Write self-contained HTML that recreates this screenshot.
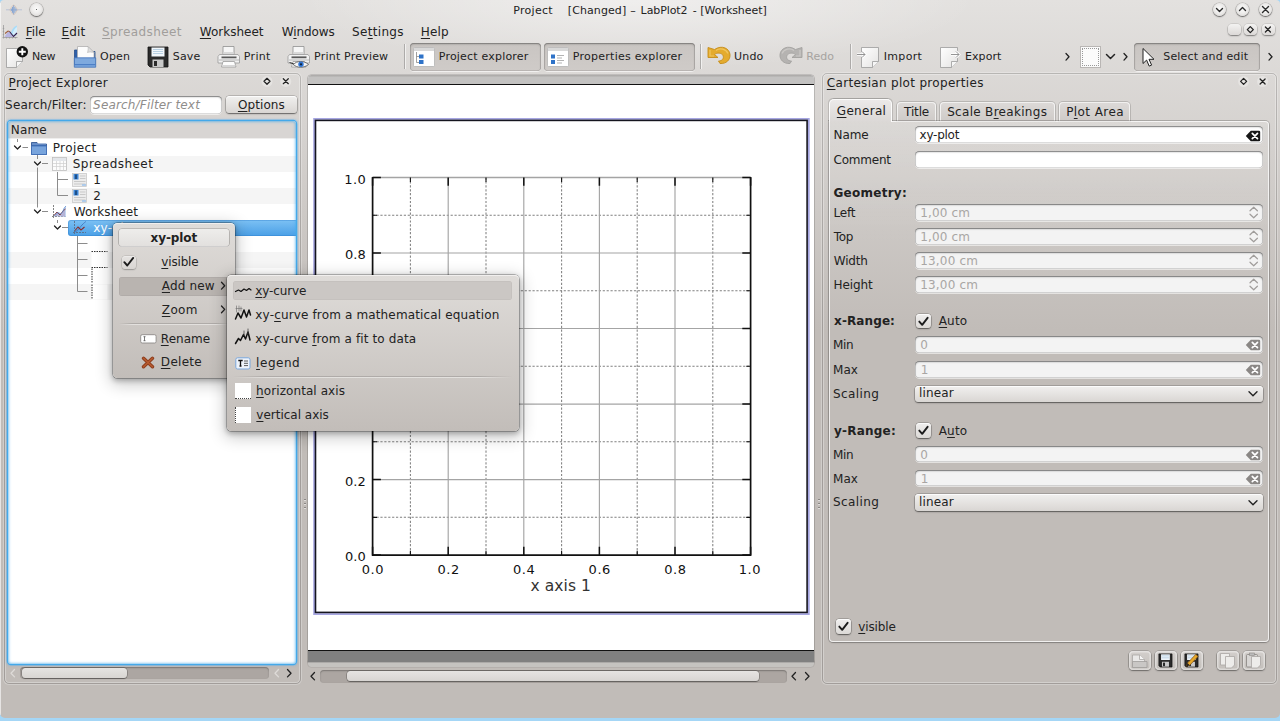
<!DOCTYPE html>
<html><head><meta charset="utf-8"><title>LabPlot2</title>
<style>
*{box-sizing:border-box;margin:0;padding:0}
html,body{width:1280px;height:721px;overflow:hidden}
body{position:relative;background:#a4d6f6;font-family:"DejaVu Sans","Liberation Sans",sans-serif;font-size:12.5px;color:#222;line-height:1}
.abs,.abs>*{position:absolute}
#win{position:absolute;left:0;top:0;width:1280px;height:718px;border-radius:4px 4px 5px 5px;overflow:hidden;
 background:radial-gradient(ellipse 340px 70px at 640px 0,rgba(255,255,255,.45),rgba(255,255,255,0) 100%),linear-gradient(#e3e1df 0,#c1bcb8 330px,#c1bcb8 100%)}
.t{position:absolute;white-space:nowrap;line-height:16px;height:16px}
u{text-decoration:underline;text-underline-offset:1.5px;text-decoration-thickness:1px}
.tb{font-size:11.2px;letter-spacing:.35px}
.dis{color:#9b9896}
.rb{margin:.6px;width:13.200px;height:13.200px;border-radius:50%;background:radial-gradient(circle at 50% 45%,#fbfbfa 0,#eeedec 45%,#d2cfcc 100%);box-shadow:0 0 0 .6px rgba(0,0,0,.22),0 1px 1.300px rgba(0,0,0,.5)}
.mb{width:13px;height:11px;border-radius:4px;background:linear-gradient(#f3f2f1,#dcd9d7);box-shadow:0 0 0 .5px rgba(0,0,0,.15),0 1px 1.5px rgba(0,0,0,.4)}

.pbtn{border-radius:4px;background:linear-gradient(#c9c5c2,#cfcbc8);box-shadow:inset 0 1px 2px rgba(0,0,0,.35),inset 0 0 0 .5px rgba(0,0,0,.18),0 1px 0 rgba(255,255,255,.6)}
.vsep{width:2px;background:linear-gradient(90deg,rgba(0,0,0,.22) 50%,rgba(255,255,255,.6) 50%)}

.dock{border:1px solid rgba(0,0,0,.16);border-radius:5px;box-shadow:inset 0 0 0 1px rgba(255,255,255,.3),0 0 0 1px rgba(255,255,255,.25)}
.inp{background:#fff;border-radius:4.500px;box-shadow:inset 0 1px 1.500px rgba(0,0,0,.45),inset 0 0 0 .5px rgba(0,0,0,.25),0 1px 0 rgba(255,255,255,.55)}
.inp.dis{background:#f3f3f3}
.btn{border-radius:3.500px;background:linear-gradient(#f1f0ef,#d9d6d3);box-shadow:0 0 0 .5px rgba(0,0,0,.3),0 1px 1.500px rgba(0,0,0,.45),inset 0 1px 0 rgba(255,255,255,.8)}
.tree{background:#fff;border-radius:3px;overflow:hidden;box-shadow:0 0 0 1.200px #44a9ea,0 0 1.500px 1.200px rgba(90,174,238,.35)}
.tglow{border-radius:3px;box-shadow:inset 0 0 2.500px .8px rgba(68,169,234,.75);pointer-events:none}
.tree>*{position:absolute}
.sgroove{border-radius:4px;background:#aca6a2;box-shadow:inset 0 1px 1.500px rgba(0,0,0,.3)}
.sthumb{border-radius:3.500px;background:linear-gradient(#e6e4e2,#d8d5d2);box-shadow:0 0 0 .5px rgba(0,0,0,.35),0 1px 1px rgba(0,0,0,.3)}

.mdi{background:#fff;border-radius:3.500px 3.500px 0 0;overflow:hidden;box-shadow:0 0 0 .6px rgba(0,0,0,.25)}
.mdi>*{position:absolute}

.pane{border-radius:0 4px 4px 4px;border:1px solid rgba(255,255,255,.75);box-shadow:0 0 0 1px rgba(0,0,0,.2),0 1px 2px rgba(0,0,0,.15);background:linear-gradient(rgba(255,255,255,.12),rgba(255,255,255,0) 120px)}
.tab{border-radius:4px 4px 0 0;border:1px solid rgba(255,255,255,.7);border-bottom:none;box-shadow:0 0 0 1px rgba(0,0,0,.15);background:linear-gradient(#dcd9d7,#cfcbc8)}
.tab.act{background:linear-gradient(#ebe9e8,#dbd8d6);border-radius:5px 5px 0 0;box-shadow:-1px -1px 0 0 rgba(0,0,0,.13),1px -1px 0 0 rgba(0,0,0,.13);border-color:rgba(255,255,255,.9)}
.btn2{border-radius:4px;background:linear-gradient(#d3cfcc,#c3bfbb);box-shadow:0 0 0 .6px rgba(0,0,0,.28),0 1px 1.500px rgba(0,0,0,.35),inset 0 0 0 1.500px rgba(255,255,255,.4)}
.chk{width:14.500px;height:14.500px;border-radius:3.500px;background:linear-gradient(#f0efee,#dcd9d6);box-shadow:0 0 0 .5px rgba(0,0,0,.3),0 1px 1.500px rgba(0,0,0,.45),inset 0 1px 0 rgba(255,255,255,.8)}

.menu{border-radius:4.500px;background:linear-gradient(#dfdcd9,#c2bdb9);box-shadow:0 0 0 .7px rgba(0,0,0,.32),inset 0 1px 0 rgba(255,255,255,.55),0 4px 16px 3px rgba(0,0,0,.2),0 2px 5px 1px rgba(0,0,0,.24)}
.msep{height:2px;background:linear-gradient(rgba(0,0,0,.14) 50%,rgba(255,255,255,.45) 50%);-webkit-mask-image:linear-gradient(90deg,transparent,#000 12%,#000 88%,transparent);mask-image:linear-gradient(90deg,transparent,#000 12%,#000 88%,transparent)}
</style></head><body>
<div id="win"><div style="position:absolute;left:0;top:3px;width:1.200px;height:712px;background:rgba(255,255,255,.6)"></div>
<div class="abs" id="titlebar">
 <svg style="left:5px;top:3px" width="18" height="14" viewBox="0 0 18 14"><path d="M1 6.800h16" stroke="#b9c2d6" stroke-width="1"/><path d="M5 6.800v0M6.300 5.500v2.600M7.500 3.800v6M8.700 2v9.600M9.900 3.800v6M11.100 5.500v2.600" stroke="#7f9fd0" stroke-width=".9" fill="none"/><path d="M4.500 6.800c1.500-1 2.500-4.800 4.200-4.800s2.700 3.800 4.200 4.800c-1.500 1-2.500 4.800-4.200 4.800s-2.700-3.800-4.200-4.800z" fill="none" stroke="#d9b9a0" stroke-width=".5"/></svg>
 <div class="rb" style="left:29.200px;top:2.200px"></div><div style="left:35.600px;top:8.600px;width:1.800px;height:1.800px;border-radius:1px;background:#333"></div>
 <div class="rb" style="left:1212.300px;top:2.200px"></div>
 <div class="rb" style="left:1235.300px;top:2.200px"></div>
 <div class="rb" style="left:1258.200px;top:2.200px"></div>
 <svg style="left:1212px;top:2px" width="70" height="15" viewBox="0 0 70 15"><g fill="none" stroke="#2a2a2a" stroke-width="1.4" stroke-linecap="round" stroke-linejoin="round"><path d="M4.5 6.5l3 3 3-3"/><path d="M27.5 8.5l3-3 3 3"/><path d="M50.5 4.5l6 6m0-6l-6 6"/></g></svg>
 <div class="mb" style="left:1227.5px;top:24px"></div>
 <div class="mb" style="left:1244px;top:24px"></div>
 <div class="mb" style="left:1261.5px;top:24px"></div>
 <svg style="left:1244px;top:24px" width="32" height="11" viewBox="0 0 32 11"><g fill="none" stroke="#222" stroke-width="1.3" stroke-linejoin="round" stroke-linecap="round"><path d="M6.3 2.6l3 3-3 3-3-3z"/><path d="M21.4 3l5 5m0-5l-5 5"/></g></svg>
<div class="t" style="left:513.35px;top:3px;font-size:11px;letter-spacing:0.275px;">Project</div><div class="t" style="left:567.85px;top:3px;font-size:11px;letter-spacing:0.081px;">[Changed]</div><div class="t" style="left:630.35px;top:3px;font-size:11px;">–</div><div class="t" style="left:640.60px;top:3px;font-size:11px;letter-spacing:-0.086px;">LabPlot2</div><div class="t" style="left:692.85px;top:3px;font-size:11px;">-</div><div class="t" style="left:700.35px;top:3px;font-size:11px;letter-spacing:-0.060px;">[Worksheet]</div></div><div class="abs" id="menubar">
 <svg style="left:2px;top:24px" width="17" height="17" viewBox="0 0 17 17"><path d="M1.500 1v13.500M.5 13.500h15M.8 4.500h1.400M.8 7.500h1.400M.8 10.500h1.400M4.500 13v1.500M7.500 13v1.500M10.500 13v1.500M13.500 13v1.500" stroke="#9a9a9a" stroke-width=".8" fill="none"/><path d="M8.500 10c1-4 3-7.500 6.500-8.500v9l-3 2.500z" fill="#aadcf8"/><path d="M10.500 9.500c1-3 2.500-5.500 4.500-6.500v6l-2.500 2.500z" fill="#d4eefc"/><path d="M2.500 13l3.500-5.500 2 1.500 3 4z" fill="#b4b0e2" opacity=".9"/><path d="M3 9.500l3-2.500 1.500.5" stroke="#a0603c" stroke-width="1.100" fill="none"/><path d="M7.500 7.500l4 5 3.500-3.500" stroke="#3a1d4a" stroke-width="1.100" fill="none"/></svg>
<div class="t" style="left:25.85px;top:24px;font-size:12px;letter-spacing:-0.117px;"><u>F</u>ile</div><div class="t" style="left:61.60px;top:24px;font-size:12px;letter-spacing:0.133px;"><u>E</u>dit</div><div class="t" style="left:102.10px;top:24px;font-size:12px;letter-spacing:0.365px;color:#a19e9b;"><u>S</u>preadsheet</div><div class="t" style="left:199.85px;top:24px;font-size:12px;letter-spacing:-0.012px;"><u>W</u>orksheet</div><div class="t" style="left:281.85px;top:24px;font-size:12px;letter-spacing:-0.100px;">W<u>i</u>ndows</div><div class="t" style="left:352.10px;top:24px;font-size:12px;letter-spacing:0.307px;">Se<u>t</u>tings</div><div class="t" style="left:420.85px;top:24px;font-size:12px;letter-spacing:0.133px;"><u>H</u>elp</div></div><div class="abs" id="toolbar"><div class="pbtn" style="left:410px;top:43px;width:131px;height:27.500px"></div><div class="pbtn" style="left:544px;top:43px;width:151px;height:27.500px"></div><div class="pbtn" style="left:1134px;top:43px;width:125.500px;height:27.500px"></div><div class="vsep" style="left:404.2px;top:44px;height:25px"></div><div class="vsep" style="left:700px;top:44px;height:25px"></div><div class="vsep" style="left:850px;top:44px;height:25px"></div><svg style="left:5px;top:45px" width="26" height="24" viewBox="0 0 26 24"><defs><linearGradient id="pg" x1="0" y1="0" x2="1" y2="1"><stop offset="0" stop-color="#fff"/><stop offset="1" stop-color="#e4e3e2"/></linearGradient></defs><path d="M1.500 3.500h16v13l-6 6h-10z" fill="url(#pg)" stroke="#9b9b9b" stroke-width=".8"/><path d="M17.500 16.500h-6v6" fill="#f6f6f6" stroke="#9b9b9b" stroke-width=".8"/><circle cx="17.300" cy="6.800" r="5.700" fill="#111"/><path d="M17.300 3.300v7M13.800 6.800h7" stroke="#fff" stroke-width="1.900"/></svg><svg style="left:73px;top:45px" width="24" height="24" viewBox="0 0 24 24"><path d="M1.500 5h5l1 1.500h14.500v13.500h-20.500z" fill="#2f5fa8" stroke="#274e8a" stroke-width=".8"/><path d="M4.500 1.500h10.500l6 6v8h-16.500z" fill="#fcfcfc" stroke="#b0b0b0" stroke-width=".8"/><path d="M15 1.500c.5 2 0 4.500-.5 6 2-.8 4.500-.5 6.500 0z" fill="#dedede" stroke="#b0b0b0" stroke-width=".6"/><path d="M1.300 12.800h21.400v9.400h-21.400z" fill="#7ea9de" stroke="#3f70b8" stroke-width=".8"/><path d="M1.800 19.700h20.400" stroke="#4d7fc6" stroke-width="1.200"/></svg><svg style="left:147px;top:46px" width="22" height="22" viewBox="0 0 22 22"><path d="M1 1h20v20h-18l-2-2z" fill="#2b2b2b" stroke="#111" stroke-width=".8"/><rect x="4.500" y="1.500" width="13" height="9" fill="#f2f7fb"/><path d="M6 3.500h10M6 5.500h10M6 7.500h10" stroke="#a9c6dd" stroke-width=".8"/><rect x="5.500" y="13.500" width="11" height="7.500" fill="#c9c9c9"/><rect x="7" y="15" width="3" height="5" fill="#2b2b2b"/></svg><svg style="left:217px;top:45px" width="24" height="24" viewBox="0 0 24 24"><path d="M6 1.500h11v8h-11z" fill="#f6f6f6" stroke="#8f8f8f" stroke-width=".8"/><path d="M6.500 7h10v2.500h-10z" fill="#d9d9d9"/><path d="M2.500 9.500h18.500l1.500 2v6.500h-21.500v-6.500z" fill="#f1f1f1" stroke="#9a9a9a" stroke-width=".8"/><path d="M4.500 12.300h15" stroke="#5a5a5a" stroke-width="1.800"/><path d="M2 15h20" stroke="#c9c9c9" stroke-width="1.400"/><path d="M6 16.500h11.500l1.500 5.500h-14.500z" fill="#fcfcfc" stroke="#9a9a9a" stroke-width=".8"/><path d="M5.500 20.500h13" stroke="#d6d6d6" stroke-width="1.200"/></svg><svg style="left:287px;top:45px" width="24" height="24" viewBox="0 0 24 24"><path d="M6 1.500h11v8h-11z" fill="#f6f6f6" stroke="#8f8f8f" stroke-width=".8"/><path d="M6.500 7h10v2.500h-10z" fill="#d9d9d9"/><path d="M2.500 9.500h18.500l1.500 2v6.500h-21.500v-6.500z" fill="#f1f1f1" stroke="#9a9a9a" stroke-width=".8"/><path d="M4.500 12.300h15" stroke="#5a5a5a" stroke-width="1.800"/><path d="M2 15h20" stroke="#c9c9c9" stroke-width="1.400"/><path d="M6 16.500h11.500l1.500 5.500h-14.500z" fill="#fcfcfc" stroke="#9a9a9a" stroke-width=".8"/><path d="M5.500 20.500h13" stroke="#d6d6d6" stroke-width="1.200"/><path d="M6.500 19.500c3-4 11-4 15 0c-4 3.600-12 3.600-15 0z" fill="#f4f4f4" stroke="#555" stroke-width=".8"/><circle cx="14" cy="19.300" r="2.700" fill="#2f74d4"/><circle cx="14" cy="19.300" r="1.100" fill="#123"/><path d="M2.500 17.500l4.500 1.500" stroke="#333" stroke-width="1"/></svg><svg style="left:413px;top:47px" width="22" height="20" viewBox="0 0 22 20"><rect x=".5" y=".5" width="21" height="19" rx="1" fill="#fff" stroke="#b4b4b4" stroke-width=".8"/><rect x="1" y="1" width="20" height="3" fill="#d9d9d9"/><path d="M3.500 5v10.500h3M3.500 9.500h3" stroke="#888" stroke-width=".8" fill="none"/><rect x="6" y="7.500" width="4.500" height="4" fill="#2f73c8"/><rect x="6" y="13" width="4.500" height="4" fill="#2f73c8"/></svg><svg style="left:547px;top:47px" width="22" height="20" viewBox="0 0 22 20"><rect x=".5" y=".5" width="21" height="19" rx="1" fill="#fff" stroke="#b4b4b4" stroke-width=".8"/><rect x="1" y="1" width="20" height="3" fill="#d9d9d9"/><rect x="4" y="7.500" width="4" height="4" fill="#2f73c8"/><rect x="4" y="13" width="4" height="4" fill="#2f73c8"/><path d="M10 8.500h7M10 11h5M10 13.500h7M10 16h5" stroke="#aaa" stroke-width=".9"/></svg><svg style="left:707px;top:44px" width="24" height="21" viewBox="0 0 24 21"><path d="M1 3.500L1 13.500L11 13.500L7.500 10.500C10 8.500 14.500 8.500 16 11.500C17.300 14.500 15 17 11.500 17L13 19.500C19 20 23.500 16 23 10.500C22.500 4.500 15 0.500 7.500 5.500Z" fill="#e4ab2e" stroke="#c58c1a" stroke-width=".9" stroke-linejoin="round"/><path d="M3 6v6h4M9 6.500c4-3 10-1.500 12 3" fill="none" stroke="#f3cc6a" stroke-width="1.200" opacity=".8"/></svg><svg style="left:779px;top:44px" width="24" height="21" viewBox="0 0 24 21"><g transform="translate(24,0) scale(-1,1)"><path d="M1 3.500L1 13.500L11 13.500L7.500 10.500C10 8.500 14.500 8.500 16 11.500C17.300 14.500 15 17 11.500 17L13 19.500C19 20 23.500 16 23 10.500C22.500 4.500 15 0.500 7.500 5.500Z" fill="#b5b3b1" stroke="#a3a19f" stroke-width=".9" stroke-linejoin="round"/><path d="M3 6v6h4M9 6.500c4-3 10-1.500 12 3" fill="none" stroke="#cfcdcb" stroke-width="1.200" opacity=".8"/></g></svg><svg style="left:856px;top:46px" width="24" height="23" viewBox="0 0 24 23"><defs><linearGradient id="pg" x1="0" y1="0" x2="1" y2="1"><stop offset="0" stop-color="#fff"/><stop offset="1" stop-color="#e4e3e2"/></linearGradient></defs><path d="M5.500 1.500h17v14l-6 6h-11z" fill="url(#pg)" stroke="#9b9b9b" stroke-width=".8"/><path d="M22.500 15.500h-6v6" fill="#f6f6f6" stroke="#9b9b9b" stroke-width=".8"/><path d="M1 8.500h8m-3-3l3 3-3 3" fill="none" stroke="#fff" stroke-width="2.600"/><path d="M1 8.500h8m-3-3l3 3-3 3" fill="none" stroke="#888" stroke-width=".9"/></svg><svg style="left:939px;top:46px" width="24" height="23" viewBox="0 0 24 23"><defs><linearGradient id="pg" x1="0" y1="0" x2="1" y2="1"><stop offset="0" stop-color="#fff"/><stop offset="1" stop-color="#e4e3e2"/></linearGradient></defs><path d="M1.500 1.500h17v14l-6 6h-11z" fill="url(#pg)" stroke="#9b9b9b" stroke-width=".8"/><path d="M18.500 15.500h-6v6" fill="#f6f6f6" stroke="#9b9b9b" stroke-width=".8"/><path d="M12 8.500h8m-3-3l3 3-3 3" fill="none" stroke="#fff" stroke-width="2.600"/><path d="M12 8.500h8m-3-3l3 3-3 3" fill="none" stroke="#888" stroke-width=".9"/></svg><svg style="left:1060px;top:48px" width="220" height="18" viewBox="0 0 220 18"><g fill="none" stroke="#222" stroke-width="1.300" stroke-linecap="round" stroke-linejoin="round"><path d="M6 5.500l3 3.300-3 3.300"/><path d="M64 5.500l3 3.300-3 3.300"/><path d="M209 5.500l3 3.300-3 3.300"/><path d="M46.500 6.500l4 4 4-4" stroke-width="1.500"/></g></svg><div style="left:1079.500px;top:46px;width:21px;height:21.500px;background:#fbfbfb;border:1px solid #b9b6b4"></div><div style="left:1081.500px;top:48px;width:17px;height:17.500px;border:1px dotted #999"></div><svg style="left:1141px;top:47px" width="16" height="22" viewBox="0 0 16 22"><path d="M2 1.500v15l3.600-3.400 2.600 6 2.400-1-2.600-5.800h5z" fill="#fff" stroke="#222" stroke-width="1" stroke-linejoin="round"/></svg><div class="t" style="left:32.10px;top:49px;font-size:11px;letter-spacing:-0.300px;">New</div><div class="t" style="left:100.10px;top:49px;font-size:11px;letter-spacing:0.133px;">Open</div><div class="t" style="left:172.85px;top:49px;font-size:11px;letter-spacing:0.133px;">Save</div><div class="t" style="left:243.85px;top:49px;font-size:11px;letter-spacing:0.288px;">Print</div><div class="t" style="left:314.10px;top:49px;font-size:11px;letter-spacing:0.200px;">Print Preview</div><div class="t" style="left:438.85px;top:49px;font-size:11px;letter-spacing:0.193px;">Project explorer</div><div class="t" style="left:572.85px;top:49px;font-size:11px;letter-spacing:0.258px;">Properties explorer</div><div class="t" style="left:734.10px;top:49px;font-size:11px;letter-spacing:0.133px;">Undo</div><div class="t" style="left:806.35px;top:49px;font-size:11px;letter-spacing:-0.033px;color:#a6a3a0;">Redo</div><div class="t" style="left:883.85px;top:49px;font-size:11px;letter-spacing:0.280px;">Import</div><div class="t" style="left:965.10px;top:49px;font-size:11px;letter-spacing:0.030px;">Export</div><div class="t" style="left:1163.35px;top:49px;font-size:11px;letter-spacing:0.136px;">Select and edit</div></div><div class="abs" id="leftdock"><div class="dock" style="left:3.500px;top:72.500px;width:297px;height:611px"></div><div class="t" style="left:8.60px;top:75px;font-size:12px;letter-spacing:0.277px;"><u>P</u>roject Explorer</div><svg style="left:260px;top:75px" width="34" height="13" viewBox="0 0 34 13"><circle cx="7" cy="6.400" r="5.500" fill="#fff" opacity=".3"/><circle cx="25.800" cy="6.400" r="5.500" fill="#fff" opacity=".3"/><g fill="none" stroke="#222" stroke-width="1.250" stroke-linejoin="round" stroke-linecap="round"><path d="M7 3.300l3 3-3 3-3-3z"/><path d="M23.300 3.700l5 5m0-5l-5 5"/></g></svg><div class="t" style="left:5.10px;top:97px;font-size:12px;letter-spacing:0.204px;">Search/Filter:</div><div class="inp" style="left:89.500px;top:96px;width:132px;height:17.500px"></div><div class="t" style="left:93.10px;top:97px;font-size:12px;letter-spacing:0.171px;color:#8f8d8b;font-style:italic;">Search/Filter text</div><div class="btn" style="left:226px;top:96px;width:71px;height:17px"></div><div class="t" style="left:237.90px;top:97px;font-size:12px;letter-spacing:0.100px;"><u>O</u>ptions</div><div class="tree" style="left:8px;top:120.500px;width:288px;height:543.500px"><div style="left:0;top:0;width:100%;height:18px;background:#d8d5d3;border-bottom:1px solid #efeeed"></div><div style="left:0;top:35.5px;width:100%;height:16px;background:#f5f5f5"></div><div style="left:0;top:67.5px;width:100%;height:16px;background:#f5f5f5"></div><div style="left:0;top:131.5px;width:100%;height:16px;background:#f5f5f5"></div><div style="left:0;top:163.5px;width:100%;height:16px;background:#f5f5f5"></div><div style="left:60px;top:99.5px;width:240px;height:16px;border-radius:3px 0 0 3px;background:linear-gradient(#7cc1f4,#4a9fe6);box-shadow:inset 0 0 0 1px rgba(40,120,200,.35)"></div></div><svg style="left:8px;top:138px" width="110" height="166" viewBox="8 138 110 166"><g stroke="#8c8c8c" stroke-width="1" fill="none"><path d="M17.500 139v3M22.500 147.500h5.500"/><path d="M37.500 155v4M37.500 167.500v40M42 163.500h6M42 211.500h6"/><path d="M57.500 172v23.500M57.500 179.500h10.500M57.500 195.500h10.500M57.500 220v3M62 227.500h6"/><path d="M77.500 236v55.500M77.500 243.500h10M77.500 259.500h10M77.500 275.500h10M77.500 291.500h10"/></g><path d="M14.5 146.0l3 3 3-3" fill="none" stroke="#222" stroke-width="1.300" stroke-linecap="round" stroke-linejoin="round"/><path d="M34.5 162.0l3 3 3-3" fill="none" stroke="#222" stroke-width="1.300" stroke-linecap="round" stroke-linejoin="round"/><path d="M34.5 210.0l3 3 3-3" fill="none" stroke="#222" stroke-width="1.300" stroke-linecap="round" stroke-linejoin="round"/><path d="M54.5 226.0l3 3 3-3" fill="none" stroke="#222" stroke-width="1.300" stroke-linecap="round" stroke-linejoin="round"/><rect x="91.500" y="236.5" width="16" height="15" fill="#fff"/><path d="M91.500 251.5h16" stroke="#333" stroke-width="1" stroke-dasharray="1.500 1" fill="none"/><rect x="91.500" y="252.5" width="16" height="15" fill="#fff"/><path d="M91.500 267.5h16" stroke="#333" stroke-width="1" stroke-dasharray="1.500 1" fill="none"/><rect x="91.500" y="268.5" width="16" height="15" fill="#fff"/><path d="M92 268.5v15" stroke="#333" stroke-width="1" stroke-dasharray="1.500 1" fill="none"/><rect x="91.500" y="284.5" width="16" height="15" fill="#fff"/><path d="M92 284.5v15" stroke="#333" stroke-width="1" stroke-dasharray="1.500 1" fill="none"/></svg><svg style="left:30px;top:140px" width="18" height="16" viewBox="0 0 18 16"><path d="M1.500 2.500h5.500l1 1.500h8.500v10.500h-15z" fill="#3d6cb4" stroke="#2c528f" stroke-width=".8"/><path d="M1.500 6h15v8.500h-15z" fill="#78a4dc" stroke="#3d6cb4" stroke-width=".8"/><path d="M2 4h14" stroke="#a9c4ea" stroke-width=".8"/></svg><svg style="left:51px;top:156px" width="17" height="16" viewBox="0 0 17 16"><rect x="1.500" y="1.500" width="14" height="13" fill="#fcfcfc" stroke="#bdbdbd" stroke-width=".8"/><rect x="2" y="2" width="13" height="3" fill="#e3e6ea"/><path d="M2 7.500h13M2 10.500h13M5.500 5v9.500M9 5v9.500M12.500 5v9.500" stroke="#cfcfcf" stroke-width=".7"/></svg><svg style="left:72px;top:173px" width="15" height="14" viewBox="0 0 15 14"><rect x=".5" y=".5" width="14" height="13" fill="#ececec" stroke="#c4c4c4" stroke-width=".7"/><rect x="1.500" y="1" width="5" height="5.500" fill="#3e86d6"/><rect x="3.300" y="1.500" width="1.400" height="4.500" fill="#123a6a"/><path d="M8 3h5.500M8 5.500h5.500M2 8.500h11.500M2 11h11.500" stroke="#c9c9c9" stroke-width="1"/><path d="M10 12h4" stroke="#9cc3ee" stroke-width="1.500"/></svg><svg style="left:72px;top:189px" width="15" height="14" viewBox="0 0 15 14"><rect x=".5" y=".5" width="14" height="13" fill="#ececec" stroke="#c4c4c4" stroke-width=".7"/><rect x="1.500" y="1" width="5" height="5.500" fill="#3e86d6"/><rect x="3.300" y="1.500" width="1.400" height="4.500" fill="#123a6a"/><path d="M8 3h5.500M8 5.500h5.500M2 8.500h11.500M2 11h11.500" stroke="#c9c9c9" stroke-width="1"/><path d="M10 12h4" stroke="#9cc3ee" stroke-width="1.500"/></svg><svg style="left:51px;top:204px" width="17" height="16" viewBox="0 0 17 16"><path d="M2.500 1v13M1 12.500h14.500" stroke="#777" stroke-width=".9" stroke-dasharray="2 1" fill="none"/><path d="M3 12c2-1 3-4 5-3s3 2 4-1 2-5 3-6v11z" fill="#bcd0ee" opacity=".85"/><path d="M3 12l3-3.500 3 3 3-3.500 2-2v6.500z" fill="#a08ab8" opacity=".45"/><path d="M3 11.500l3-3.500 3 3 3-4 2.500-2" stroke="#8a3a3a" stroke-width="1" fill="none"/><path d="M3 12c2-1 3-4 5-3s3 1 4-2 2-4 3-5" stroke="#5a8ad0" stroke-width=".9" fill="none"/></svg><svg style="left:72px;top:220px" width="15" height="16" viewBox="0 0 15 16"><path d="M2.500 1v13M1 12.500h13" stroke="#5b6f8a" stroke-width=".9" stroke-dasharray="2 1" fill="none"/><path d="M3 12c3-1 5-5 7-7s3-3 4-3.500" stroke="#3f6fb5" stroke-width=".8" fill="none"/><path d="M3 10.500l3-3.500 3 3 3.500-3" stroke="#8a2f2f" stroke-width="1.100" fill="none"/></svg><div class="t" style="left:10.85px;top:122px;font-size:12px;letter-spacing:0.133px;">Name</div><div class="t" style="left:52.70px;top:140px;font-size:12px;letter-spacing:0.400px;">Project</div><div class="t" style="left:72.80px;top:156px;font-size:12px;letter-spacing:0.450px;">Spreadsheet</div><div class="t" style="left:93.20px;top:172px;font-size:12px;">1</div><div class="t" style="left:93.20px;top:188px;font-size:12px;">2</div><div class="t" style="left:73.70px;top:204px;font-size:12px;letter-spacing:0.075px;">Worksheet</div><div class="t" style="left:93.20px;top:220px;font-size:12px;letter-spacing:0.300px;color:#fff;">xy-plot</div><div class="tglow" style="left:8px;top:120.500px;width:288px;height:543.500px"></div><div class="sgroove" style="left:20px;top:666.700px;width:249px;height:12.800px"></div><div class="sthumb" style="left:21.500px;top:668px;width:105.700px;height:10.200px"></div><svg style="left:8px;top:666px" width="290" height="15" viewBox="0 0 290 15"><g fill="none" stroke-width="1.300" stroke-linecap="round" stroke-linejoin="round"><path d="M6.500 3.500l-3.500 3.700 3.500 3.700" stroke="#dedbd8"/><path d="M270.500 3.500l-3.500 3.700 3.500 3.700" stroke="#dedbd8"/><path d="M279.500 3.500l3.500 3.700-3.500 3.700" stroke="#222"/></g></svg></div><div class="abs" id="center"><div style="left:303.5px;top:499px;width:2px;height:11px;background:repeating-linear-gradient(rgba(0,0,0,.28) 0 1px,rgba(255,255,255,.5) 1px 2px,transparent 2px 4px)"></div><div style="left:817.5px;top:499px;width:2px;height:11px;background:repeating-linear-gradient(rgba(0,0,0,.28) 0 1px,rgba(255,255,255,.5) 1px 2px,transparent 2px 4px)"></div><div style="left:307.500px;top:661px;width:506.400px;height:5.500px;background:#c5c3c0;border-radius:0 0 3.500px 3.500px;box-shadow:0 0 0 .6px rgba(0,0,0,.12)"></div><div class="mdi" style="left:307.500px;top:74.700px;width:506.400px;height:587.100px"><div style="left:0;top:0;width:100%;height:9.300px;background:linear-gradient(#a9a7a5,#c3c2c1 2.500px)"></div><div style="left:0;top:9px;width:100%;height:1.400px;background:#111"></div><div style="left:0;bottom:0;width:100%;height:10.300px;background:#808080"></div><div style="left:0;bottom:10.300px;width:100%;height:1.100px;background:#111"></div></div><svg style="left:308px;top:84px" width="506" height="566" viewBox="308 84 506 566"><rect x="314.100" y="118.900" width="494.700" height="495.200" fill="none" stroke="#a6a6e2" stroke-width="1.800"/><rect x="315.500" y="120.400" width="491.600" height="492" fill="none" stroke="#15151f" stroke-width="1.600"/><g stroke="#808080" stroke-width="1.050" stroke-dasharray="2.200 1.700" fill="none"><path d="M410.40 177.5V555.1"/><path d="M372.6 215.26H750.6"/><path d="M486.00 177.5V555.1"/><path d="M372.6 290.78H750.6"/><path d="M561.60 177.5V555.1"/><path d="M372.6 366.30H750.6"/><path d="M637.20 177.5V555.1"/><path d="M372.6 441.82H750.6"/><path d="M712.80 177.5V555.1"/><path d="M372.6 517.34H750.6"/></g><g stroke="#a4a4a4" stroke-width="1.150" fill="none"><path d="M448.20 177.5V555.1"/><path d="M372.6 253.02H750.6"/><path d="M523.80 177.5V555.1"/><path d="M372.6 328.54H750.6"/><path d="M599.40 177.5V555.1"/><path d="M372.6 404.06H750.6"/><path d="M675.00 177.5V555.1"/><path d="M372.6 479.58H750.6"/><path d="M372.6 177.5H750.6" stroke-width="1.400"/></g><g stroke="#111" fill="none"><path d="M372.6 177.0V555.1H750.6V177.0" stroke-width="1.700"/><path d="M372.60 177.5v8.3 M372.60 555.1v-8.3 M372.6 177.50h8.3 M750.6 177.50h-8.3" stroke-width="1.5"/><path d="M410.40 177.5v4.4 M410.40 555.1v-4.4 M372.6 215.26h4.4 M750.6 215.26h-4.4" stroke-width="1.1"/><path d="M448.20 177.5v8.3 M448.20 555.1v-8.3 M372.6 253.02h8.3 M750.6 253.02h-8.3" stroke-width="1.5"/><path d="M486.00 177.5v4.4 M486.00 555.1v-4.4 M372.6 290.78h4.4 M750.6 290.78h-4.4" stroke-width="1.1"/><path d="M523.80 177.5v8.3 M523.80 555.1v-8.3 M372.6 328.54h8.3 M750.6 328.54h-8.3" stroke-width="1.5"/><path d="M561.60 177.5v4.4 M561.60 555.1v-4.4 M372.6 366.30h4.4 M750.6 366.30h-4.4" stroke-width="1.1"/><path d="M599.40 177.5v8.3 M599.40 555.1v-8.3 M372.6 404.06h8.3 M750.6 404.06h-8.3" stroke-width="1.5"/><path d="M637.20 177.5v4.4 M637.20 555.1v-4.4 M372.6 441.82h4.4 M750.6 441.82h-4.4" stroke-width="1.1"/><path d="M675.00 177.5v8.3 M675.00 555.1v-8.3 M372.6 479.58h8.3 M750.6 479.58h-8.3" stroke-width="1.5"/><path d="M712.80 177.5v4.4 M712.80 555.1v-4.4 M372.6 517.34h4.4 M750.6 517.34h-4.4" stroke-width="1.1"/><path d="M750.60 177.5v8.3 M750.60 555.1v-8.3 M372.6 555.10h8.3 M750.6 555.10h-8.3" stroke-width="1.5"/></g></svg><div class="t" style="left:361.80px;top:562px;font-size:13px;letter-spacing:0.550px;color:#111;">0.0</div><div class="t" style="left:345.00px;top:549px;font-size:13px;color:#111;">0.0</div><div class="t" style="left:437.40px;top:562px;font-size:13px;letter-spacing:0.550px;color:#111;">0.2</div><div class="t" style="left:345.00px;top:474px;font-size:13px;color:#111;">0.2</div><div class="t" style="left:513.00px;top:562px;font-size:13px;letter-spacing:0.550px;color:#111;">0.4</div><div class="t" style="left:345.00px;top:398px;font-size:13px;color:#111;">0.4</div><div class="t" style="left:588.60px;top:562px;font-size:13px;letter-spacing:0.550px;color:#111;">0.6</div><div class="t" style="left:345.00px;top:323px;font-size:13px;color:#111;">0.6</div><div class="t" style="left:664.20px;top:562px;font-size:13px;letter-spacing:0.550px;color:#111;">0.8</div><div class="t" style="left:345.00px;top:247px;font-size:13px;color:#111;">0.8</div><div class="t" style="left:738.80px;top:562px;font-size:13px;letter-spacing:0.500px;color:#111;">1.0</div><div class="t" style="left:344.30px;top:172px;font-size:13px;letter-spacing:0.350px;color:#111;">1.0</div><div class="t" style="left:530.50px;top:578px;font-size:15.5px;letter-spacing:0.071px;color:#333;">x axis 1</div><div class="sgroove" style="left:319.500px;top:670px;width:467.500px;height:12.500px"></div><div class="sthumb" style="left:347px;top:671.300px;width:412px;height:10px"></div><svg style="left:308px;top:669px" width="506" height="15" viewBox="0 0 506 15"><g fill="none" stroke="#222" stroke-width="1.300" stroke-linecap="round" stroke-linejoin="round"><path d="M6.500 3.500l-3.500 3.700 3.500 3.700"/><path d="M487.500 3.500l-3.500 3.700 3.500 3.700"/><path d="M497.500 3.500l3.500 3.700-3.500 3.700"/></g></svg></div><div class="abs" id="rightdock"><div class="dock" style="left:821.500px;top:72.500px;width:455px;height:611px"></div><div class="t" style="left:826.80px;top:75px;font-size:12px;letter-spacing:0.312px;"><u>C</u>artesian plot properties</div><svg style="left:1235.500px;top:75px" width="34" height="13" viewBox="0 0 34 13"><circle cx="7.600" cy="6.500" r="5.500" fill="#fff" opacity=".3"/><circle cx="26.600" cy="6.500" r="5.500" fill="#fff" opacity=".3"/><g fill="none" stroke="#222" stroke-width="1.250" stroke-linejoin="round" stroke-linecap="round"><path d="M7.600 3.400l3 3-3 3-3-3z"/><path d="M24.100 4l5 5m0-5l-5 5"/></g></svg><div class="tab" style="left:896.500px;top:101.500px;width:39.500px;height:19px"></div><div class="tab" style="left:940px;top:101.500px;width:114.500px;height:19px"></div><div class="tab" style="left:1059px;top:101.500px;width:71px;height:19px"></div><div class="pane" style="left:829px;top:120.500px;width:440px;height:521px"></div><div class="tab act" style="left:829px;top:99px;width:63px;height:22.600px"></div><div class="t" style="left:836.80px;top:103px;font-size:12px;letter-spacing:0.300px;"><u>G</u>eneral</div><div class="t" style="left:904.10px;top:104px;font-size:12px;letter-spacing:-0.150px;">Title</div><div class="t" style="left:947.20px;top:104px;font-size:12px;letter-spacing:0.300px;">Scale B<u>r</u>eakings</div><div class="t" style="left:1066.20px;top:104px;font-size:12px;letter-spacing:0.413px;">P<u>l</u>ot Area</div><div class="t" style="left:833.50px;top:127px;font-size:12px;letter-spacing:-0.067px;">Name</div><div class="inp" style="left:915.200px;top:126.1px;width:347.500px;height:17.3px"></div><div class="t" style="left:919.60px;top:127px;font-size:12px;letter-spacing:-0.250px;">xy-plot</div><svg style="left:1244.800px;top:129.5px" width="16" height="12" viewBox="0 0 16 12"><path d="M.8 6l5-5.300h8.200a1.200 1.200 0 0 1 1.200 1.200v8.200a1.200 1.200 0 0 1-1.200 1.200h-8.200z" fill="#161616"/><path d="M7.300 3.300l5.200 5.400m0-5.400l-5.200 5.400" stroke="#fff" stroke-width="1.700" stroke-linecap="round"/></svg><div class="t" style="left:833.50px;top:152px;font-size:12px;letter-spacing:-0.217px;">Comment</div><div class="inp" style="left:915.200px;top:150.8px;width:347.500px;height:17.2px"></div><div class="t" style="left:833.50px;top:185px;font-size:12px;letter-spacing:0.263px;font-weight:bold;">Geometry:</div><div class="t" style="left:833.50px;top:205px;font-size:12px;letter-spacing:-0.233px;">Left</div><div class="inp dis" style="left:915.200px;top:203.9px;width:347.500px;height:17.3px"></div><div class="t" style="left:920.20px;top:205px;font-size:12px;letter-spacing:0.167px;color:#a9a6a4;">1,00 cm</div><svg style="left:1248px;top:205.4px" width="12" height="15" viewBox="0 0 12 15"><g fill="none" stroke="#a09d9b" stroke-width="1.200" stroke-linecap="round" stroke-linejoin="round"><path d="M2 5.800l3.700-3.600 3.700 3.600"/><path d="M2 9.200l3.700 3.600 3.700-3.600"/></g></svg><div class="t" style="left:833.80px;top:229px;font-size:12px;letter-spacing:-0.400px;">Top</div><div class="inp dis" style="left:915.200px;top:227.9px;width:347.500px;height:17.3px"></div><div class="t" style="left:920.20px;top:229px;font-size:12px;letter-spacing:0.167px;color:#a9a6a4;">1,00 cm</div><svg style="left:1248px;top:229.4px" width="12" height="15" viewBox="0 0 12 15"><g fill="none" stroke="#a09d9b" stroke-width="1.200" stroke-linecap="round" stroke-linejoin="round"><path d="M2 5.800l3.700-3.600 3.700 3.600"/><path d="M2 9.200l3.700 3.600 3.700-3.600"/></g></svg><div class="t" style="left:833.80px;top:253px;font-size:12px;letter-spacing:-0.225px;">Width</div><div class="inp dis" style="left:915.200px;top:251.9px;width:347.500px;height:17.3px"></div><div class="t" style="left:920.20px;top:253px;font-size:12px;letter-spacing:0.186px;color:#a9a6a4;">13,00 cm</div><svg style="left:1248px;top:253.4px" width="12" height="15" viewBox="0 0 12 15"><g fill="none" stroke="#a09d9b" stroke-width="1.200" stroke-linecap="round" stroke-linejoin="round"><path d="M2 5.800l3.700-3.600 3.700 3.600"/><path d="M2 9.200l3.700 3.600 3.700-3.600"/></g></svg><div class="t" style="left:833.50px;top:277px;font-size:12px;letter-spacing:-0.100px;">Height</div><div class="inp dis" style="left:915.200px;top:275.9px;width:347.500px;height:17.3px"></div><div class="t" style="left:920.20px;top:277px;font-size:12px;letter-spacing:0.186px;color:#a9a6a4;">13,00 cm</div><svg style="left:1248px;top:277.4px" width="12" height="15" viewBox="0 0 12 15"><g fill="none" stroke="#a09d9b" stroke-width="1.200" stroke-linecap="round" stroke-linejoin="round"><path d="M2 5.800l3.700-3.600 3.700 3.600"/><path d="M2 9.200l3.700 3.600 3.700-3.600"/></g></svg><div class="t" style="left:834.10px;top:313px;font-size:12px;letter-spacing:0.100px;font-weight:bold;">x-Range:</div><div class="chk" style="left:916.2px;top:313.5px"></div><svg style="left:916.2px;top:313.5px" width="15" height="15" viewBox="0 0 15 15"><path d="M3.300 7.600l2.900 3.200 5.400-7" fill="none" stroke="#1c1c1c" stroke-width="1.900" stroke-linecap="round" stroke-linejoin="round"/></svg><div class="t" style="left:938.70px;top:313px;font-size:12px;letter-spacing:0.183px;"><u>A</u>uto</div><div class="t" style="left:833.10px;top:337px;font-size:12px;letter-spacing:-0.400px;">Min</div><div class="inp dis" style="left:915.200px;top:336.3px;width:347.500px;height:16.6px"></div><div class="t" style="left:920.20px;top:337px;font-size:12px;color:#a9a6a4;">0</div><svg style="left:1244.800px;top:339.3px" width="16" height="12" viewBox="0 0 16 12"><path d="M.8 6l5-5.300h8.200a1.200 1.200 0 0 1 1.200 1.200v8.200a1.200 1.200 0 0 1-1.200 1.200h-8.200z" fill="#8a8785"/><path d="M7.300 3.300l5.200 5.400m0-5.400l-5.200 5.400" stroke="#fff" stroke-width="1.700" stroke-linecap="round"/></svg><div class="t" style="left:833.10px;top:362px;font-size:12px;letter-spacing:-0.050px;">Max</div><div class="inp dis" style="left:915.200px;top:361.1px;width:347.500px;height:16.8px"></div><div class="t" style="left:920.80px;top:362px;font-size:12px;color:#a9a6a4;">1</div><svg style="left:1244.800px;top:364.1px" width="16" height="12" viewBox="0 0 16 12"><path d="M.8 6l5-5.300h8.200a1.200 1.200 0 0 1 1.200 1.200v8.200a1.200 1.200 0 0 1-1.200 1.200h-8.200z" fill="#8a8785"/><path d="M7.300 3.300l5.200 5.400m0-5.400l-5.200 5.400" stroke="#fff" stroke-width="1.700" stroke-linecap="round"/></svg><div class="t" style="left:833.10px;top:386px;font-size:12px;letter-spacing:0.400px;">Scaling</div><div class="btn" style="left:914.800px;top:385.59999999999997px;width:348px;height:16.800px"></div><div class="t" style="left:919.10px;top:385px;font-size:12px;letter-spacing:0.130px;">linear</div><svg style="left:1247px;top:389.9px" width="12" height="8" viewBox="0 0 12 8"><path d="M2 1.700l4 4 4-4" fill="none" stroke="#222" stroke-width="1.400" stroke-linecap="round" stroke-linejoin="round"/></svg><div class="t" style="left:834.10px;top:423px;font-size:12px;letter-spacing:0.200px;font-weight:bold;">y-Range:</div><div class="chk" style="left:916.2px;top:423px"></div><svg style="left:916.2px;top:423px" width="15" height="15" viewBox="0 0 15 15"><path d="M3.300 7.600l2.900 3.200 5.400-7" fill="none" stroke="#1c1c1c" stroke-width="1.900" stroke-linecap="round" stroke-linejoin="round"/></svg><div class="t" style="left:938.70px;top:423px;font-size:12px;letter-spacing:0.183px;">A<u>u</u>to</div><div class="t" style="left:833.10px;top:447px;font-size:12px;letter-spacing:-0.400px;">Min</div><div class="inp dis" style="left:915.200px;top:445.8px;width:347.500px;height:16.6px"></div><div class="t" style="left:920.20px;top:447px;font-size:12px;color:#a9a6a4;">0</div><svg style="left:1244.800px;top:448.8px" width="16" height="12" viewBox="0 0 16 12"><path d="M.8 6l5-5.300h8.200a1.200 1.200 0 0 1 1.200 1.200v8.200a1.200 1.200 0 0 1-1.200 1.200h-8.200z" fill="#8a8785"/><path d="M7.300 3.300l5.200 5.400m0-5.400l-5.200 5.400" stroke="#fff" stroke-width="1.700" stroke-linecap="round"/></svg><div class="t" style="left:833.10px;top:471px;font-size:12px;letter-spacing:-0.050px;">Max</div><div class="inp dis" style="left:915.200px;top:469.7px;width:347.500px;height:16.8px"></div><div class="t" style="left:920.80px;top:471px;font-size:12px;color:#a9a6a4;">1</div><svg style="left:1244.800px;top:472.7px" width="16" height="12" viewBox="0 0 16 12"><path d="M.8 6l5-5.300h8.200a1.200 1.200 0 0 1 1.200 1.200v8.200a1.200 1.200 0 0 1-1.200 1.200h-8.200z" fill="#8a8785"/><path d="M7.300 3.300l5.200 5.400m0-5.400l-5.200 5.400" stroke="#fff" stroke-width="1.700" stroke-linecap="round"/></svg><div class="t" style="left:833.10px;top:494px;font-size:12px;letter-spacing:0.400px;">Scaling</div><div class="btn" style="left:914.800px;top:494.2px;width:348px;height:16.800px"></div><div class="t" style="left:919.10px;top:494px;font-size:12px;letter-spacing:0.130px;">linear</div><svg style="left:1247px;top:498.5px" width="12" height="8" viewBox="0 0 12 8"><path d="M2 1.700l4 4 4-4" fill="none" stroke="#222" stroke-width="1.400" stroke-linecap="round" stroke-linejoin="round"/></svg><div class="chk" style="left:836px;top:619.2px"></div><svg style="left:836px;top:619.2px" width="15" height="15" viewBox="0 0 15 15"><path d="M3.300 7.600l2.900 3.200 5.400-7" fill="none" stroke="#1c1c1c" stroke-width="1.900" stroke-linecap="round" stroke-linejoin="round"/></svg><div class="t" style="left:858.30px;top:619px;font-size:12px;letter-spacing:-0.133px;"><u>v</u>isible</div><div class="btn2" style="left:1128.8px;top:651.200px;width:22.300px;height:18.800px"></div><div class="btn2" style="left:1154.8px;top:651.200px;width:22.300px;height:18.800px"></div><div class="btn2" style="left:1180.9px;top:651.200px;width:22.300px;height:18.800px"></div><div class="btn2" style="left:1216.8px;top:651.200px;width:22.300px;height:18.800px"></div><div class="btn2" style="left:1242.8px;top:651.200px;width:22.300px;height:18.800px"></div><svg style="left:1131px;top:652px" width="18" height="17" viewBox="0 0 18 17"><path d="M1.500 3h7l5 4.500v7.500h-12z" fill="#e9e8e7" stroke="#a9a7a5" stroke-width=".8"/><path d="M8.500 3v4.500h5" fill="#f7f7f7" stroke="#a9a7a5" stroke-width=".8"/><path d="M1.500 9.500h14.500v6h-14.500z" fill="#c9c7c5" stroke="#9f9d9b" stroke-width=".8"/></svg><svg style="left:1158.200px;top:653.300px" width="15.800" height="14.900" viewBox="0 0 18 17"><path d="M1 1h15v15h-13.500l-1.500-1.500z" fill="#2b2b2b" stroke="#111" stroke-width=".8"/><rect x="3.500" y="1.500" width="10" height="6.500" fill="#eef4fa"/><path d="M4.500 3.300h8M4.500 5.500h8" stroke="#a9c6dd" stroke-width=".8"/><rect x="4.500" y="10" width="8" height="5.600" fill="#c9c9c9"/><rect x="5.700" y="11" width="2.300" height="4" fill="#2b2b2b"/></svg><svg style="left:1184.200px;top:653.300px" width="15.800" height="14.900" viewBox="0 0 18 17"><path d="M1 1h15v15h-13.500l-1.500-1.500z" fill="#2b2b2b" stroke="#111" stroke-width=".8"/><rect x="3.500" y="1.500" width="10" height="6.500" fill="#eef4fa"/><path d="M4.500 3.300h8M4.500 5.500h8" stroke="#a9c6dd" stroke-width=".8"/><rect x="4.500" y="10" width="8" height="5.600" fill="#c9c9c9"/><rect x="5.700" y="11" width="2.300" height="4" fill="#2b2b2b"/><path d="M3 15l1-3.500 9.500-10 2.500 2.500-9.500 10z" fill="#e8a92c" stroke="#7a4a10" stroke-width=".8"/><path d="M3 15l1-3.500 2.500 2.500z" fill="#222"/></svg><svg style="left:1219px;top:652px" width="18" height="17" viewBox="0 0 18 17"><path d="M1.5 1.5h9v8.500l-3 3h-6z" fill="#edecea" stroke="#a9a6a3" stroke-width=".8"/><path d="M6.5 4.5h9v8.500l-3 3h-6z" fill="#edecea" stroke="#a9a6a3" stroke-width=".8"/></svg><svg style="left:1245px;top:652px" width="18" height="17" viewBox="0 0 18 17"><rect x="1.500" y="2.500" width="11" height="12.500" rx="1" fill="#d8d6d4" stroke="#8e8b88" stroke-width=".9"/><rect x="4.500" y="1" width="5" height="2.500" fill="#bbb" stroke="#8e8b88" stroke-width=".6"/><path d="M6.5 4.5h9v8.500l-3 3h-6z" fill="#edecea" stroke="#a9a6a3" stroke-width=".8"/></svg></div><div class="abs" id="menus"><div class="menu" style="left:113.200px;top:223.200px;width:121.800px;height:154.800px"></div><div style="left:119.200px;top:229.200px;width:109.600px;height:16.400px;border-radius:3px;background:linear-gradient(#eeedeb,#e2e0de);box-shadow:0 0 0 .6px rgba(0,0,0,.3),0 1px 0 rgba(255,255,255,.7)"></div><div class="t" style="left:150.60px;top:230px;font-size:12px;letter-spacing:-0.100px;font-weight:bold;">xy-plot</div><div class="chk" style="left:122px;top:255.500px;width:14px;height:13.500px;opacity:.55"></div><svg style="left:121px;top:254px" width="16" height="16" viewBox="0 0 16 16"><path d="M3.300 8.200l3 3.300 5.900-7.600" fill="none" stroke="#1c1c1c" stroke-width="1.900" stroke-linecap="round" stroke-linejoin="round"/></svg><div class="t" style="left:161.35px;top:254px;font-size:12px;letter-spacing:-0.183px;"><u>v</u>isible</div><div style="left:119.200px;top:277px;width:112px;height:18.600px;border-radius:3px;background:#b9b4b0;box-shadow:inset 0 0 0 .5px rgba(0,0,0,.08)"></div><div class="t" style="left:161.85px;top:278px;font-size:12px;letter-spacing:0.150px;"><u>A</u>dd new</div><div class="t" style="left:161.85px;top:302px;font-size:12px;letter-spacing:0.300px;"><u>Z</u>oom</div><svg style="left:218px;top:280px" width="10" height="36" viewBox="0 0 10 36"><g fill="none" stroke="#222" stroke-width="1.300" stroke-linecap="round" stroke-linejoin="round"><path d="M3.500 2.300l3.200 3.400-3.200 3.400"/><path d="M3.500 26l3.200 3.400-3.200 3.400"/></g></svg><div class="msep" style="left:119px;top:323.300px;width:110px"></div><svg style="left:139.500px;top:333.500px" width="17" height="10" viewBox="0 0 17 10"><rect x=".7" y=".7" width="15.400" height="8.300" rx="1.500" fill="#fff" stroke="#8d8a88" stroke-width=".9"/><path d="M3.500 2.700h2M4.500 2.700v4M3.500 6.700h2" stroke="#444" stroke-width=".7" fill="none"/></svg><div class="t" style="left:160.85px;top:331px;font-size:12px;letter-spacing:0.030px;"><u>R</u>ename</div><svg style="left:141px;top:355.500px" width="14" height="13" viewBox="0 0 14 13"><path d="M2.500 2.300l9 8.500M11.500 2.300l-9 8.500" stroke="#8f3f1f" stroke-width="3.400" stroke-linecap="round"/><path d="M2.500 2.300l9 8.500M11.500 2.300l-9 8.500" stroke="#b85c30" stroke-width="1.300" stroke-linecap="round"/></svg><div class="t" style="left:160.85px;top:354px;font-size:12px;letter-spacing:0.280px;"><u>D</u>elete</div><div class="menu" style="left:227px;top:275px;width:291.800px;height:155.500px"></div><div style="left:233px;top:281.200px;width:279px;height:19.300px;border-radius:3px;background:#cbc7c4;box-shadow:inset 0 0 0 .5px rgba(0,0,0,.06)"></div><div class="t" style="left:255.35px;top:283px;font-size:12px;letter-spacing:-0.121px;"><u>x</u>y-curve</div><div class="t" style="left:255.35px;top:307px;font-size:12px;letter-spacing:0.150px;">xy-<u>c</u>urve from a mathematical equation</div><div class="t" style="left:255.35px;top:331px;font-size:12px;letter-spacing:0.121px;">xy-curve <u>f</u>rom a fit to data</div><div class="t" style="left:256.10px;top:355px;font-size:12px;letter-spacing:0.530px;"><u>l</u>egend</div><div class="msep" style="left:233px;top:376.300px;width:279px"></div><div class="t" style="left:256.10px;top:383px;font-size:12px;letter-spacing:0.082px;"><u>h</u>orizontal axis</div><div class="t" style="left:256.35px;top:407px;font-size:12px;letter-spacing:-0.008px;"><u>v</u>ertical axis</div><svg style="left:234px;top:282px" width="18" height="66" viewBox="0 0 18 66"><g fill="none" stroke="#111" stroke-linejoin="round" stroke-linecap="round"><path d="M1.500 9.500l3-1.500 2.500 1.500 3-2.500 2.500 1.500 2.500-2 2 1.500" stroke-width="1.200"/><path d="M1.500 37l2.500-6 3 5 3-8 2.500 7 2.500-7 1.500 5" stroke-width="1.500"/><path d="M2.500 24v6M5 24v5M7 25v4M2 26.500h6" stroke="#777" stroke-width=".7"/><path d="M1.500 61.500l3-5 2 2 3-6 2 4.500 2.500-7 2 8" stroke-width="1.500"/><path d="M10 49v4M14 47v5" stroke="#444" stroke-width=".8"/></g></svg><svg style="left:235px;top:356.500px" width="16" height="13" viewBox="0 0 16 13"><rect x=".8" y=".8" width="14.200" height="11.200" rx="1.800" fill="#eef3fa" stroke="#7aa7dc" stroke-width="1"/><path d="M3.300 3.500h4.400M5.500 3.500v5.500M4.500 9h2" stroke="#111" stroke-width="1.300" fill="none"/><path d="M9 4h4M9 6.300h4M9 8.600h4" stroke="#333" stroke-width=".8"/></svg><div style="left:235px;top:383.300px;width:16.200px;height:15.500px;background:#fff;border-bottom:1px dotted #444"></div><div style="left:235px;top:407.200px;width:16.200px;height:15.800px;background:#fff;border-left:1px dotted #444"></div></div>
</div>
</body></html>
